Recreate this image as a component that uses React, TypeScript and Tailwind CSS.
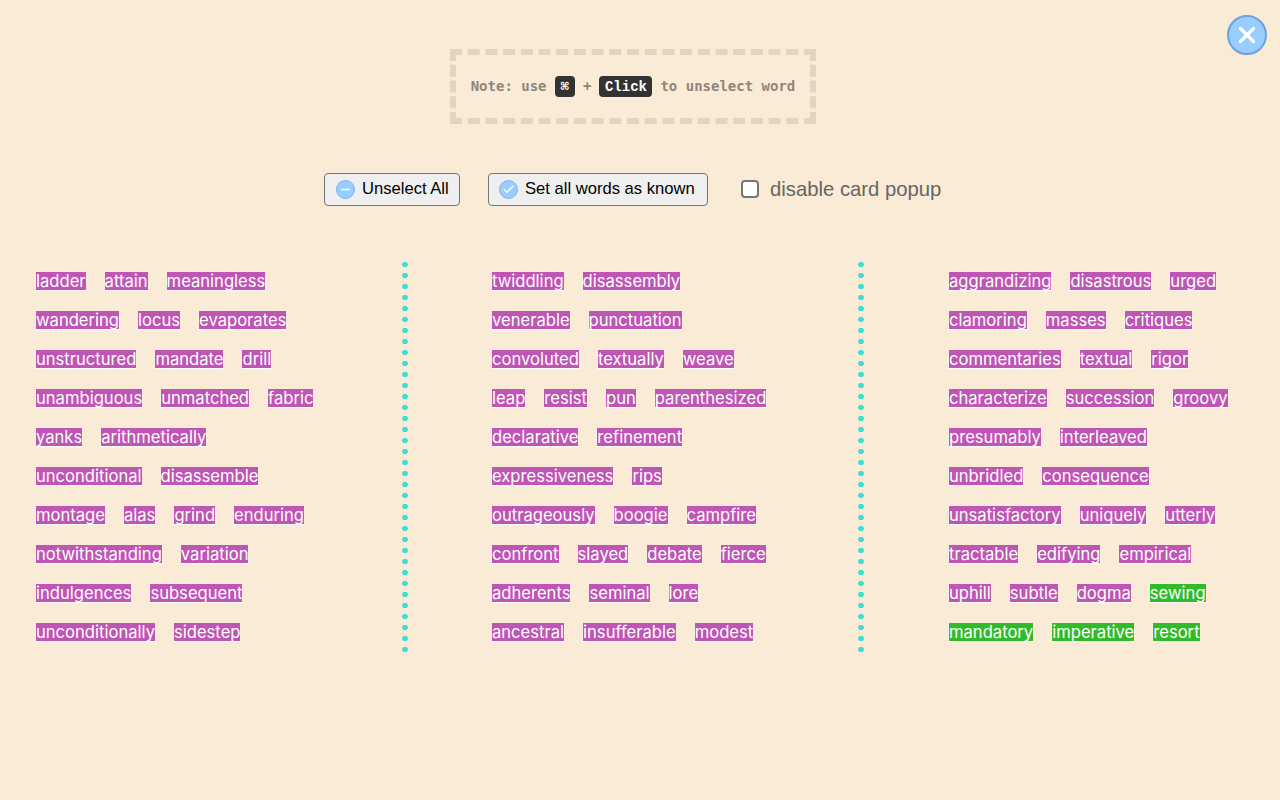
import { Check, Minus, X } from 'lucide-react';

const columns: string[][][] = [
  [
    ['ladder', 'attain', 'meaningless'],
    ['wandering', 'locus', 'evaporates'],
    ['unstructured', 'mandate', 'drill'],
    ['unambiguous', 'unmatched', 'fabric'],
    ['yanks', 'arithmetically'],
    ['unconditional', 'disassemble'],
    ['montage', 'alas', 'grind', 'enduring'],
    ['notwithstanding', 'variation'],
    ['indulgences', 'subsequent'],
    ['unconditionally', 'sidestep'],
  ],
  [
    ['twiddling', 'disassembly'],
    ['venerable', 'punctuation'],
    ['convoluted', 'textually', 'weave'],
    ['leap', 'resist', 'pun', 'parenthesized'],
    ['declarative', 'refinement'],
    ['expressiveness', 'rips'],
    ['outrageously', 'boogie', 'campfire'],
    ['confront', 'slayed', 'debate', 'fierce'],
    ['adherents', 'seminal', 'lore'],
    ['ancestral', 'insufferable', 'modest'],
  ],
  [
    ['aggrandizing', 'disastrous', 'urged'],
    ['clamoring', 'masses', 'critiques'],
    ['commentaries', 'textual', 'rigor'],
    ['characterize', 'succession', 'groovy'],
    ['presumably', 'interleaved'],
    ['unbridled', 'consequence'],
    ['unsatisfactory', 'uniquely', 'utterly'],
    ['tractable', 'edifying', 'empirical'],
    ['uphill', 'subtle', 'dogma', 'sewing'],
    ['mandatory', 'imperative', 'resort'],
  ],
];

const knownWords = ['sewing', 'mandatory', 'imperative', 'resort'];

const Word = ({ word }: { word: string }) => (
  <span
    className={`font-['Inter',sans-serif] text-[16.6px] leading-[18px] text-white shadow-[0_1px_1px_rgba(255,255,255,0.9)] ${
      knownWords.includes(word) ? 'bg-[#32bb28]' : 'bg-[#bf55b5]'
    }`}
  >
    {word}
  </span>
);

const Key = ({ children, className }: { children: React.ReactNode; className: string }) => (
  <kbd className={`inline-flex h-[21px] items-center rounded-[4px] bg-[#333] pt-[2px] font-bold text-white ${className}`}>
    {children}
  </kbd>
);

const Divider = () => (
  <div className="-mt-[2px] h-[396px] w-[6px] bg-[radial-gradient(circle,#40e0d0_2.5px,transparent_3px)] bg-[length:6px_11px]" />
);

export default function App() {
  return (
    <div className="relative min-h-[800px] bg-[#faebd7] font-['Liberation_Sans',sans-serif]">
      <button className="absolute right-[13px] top-[15px] flex h-10 w-10 items-center justify-center rounded-full border-2 border-[#6ea3d8] bg-[#99ccff] text-white">
        <X size={26} strokeWidth={3} />
      </button>

      <div className="flex justify-center pt-[49px] pr-[14px]">
        <div className="flex h-[75px] w-[366px] items-center justify-center gap-[8px] border-[6px] border-dashed border-[#e3d3c0] font-['DejaVu_Sans_Mono',monospace] text-[14px] font-bold text-[#8f8677]">
          <span>Note: use</span>
          <Key className="px-[6px]">⌘</Key>
          <span>+</span>
          <Key className="px-[5.5px]">Click</Key>
          <span>to unselect word</span>
        </div>
      </div>

      <div className="mt-[49px] flex h-[33px] items-center pl-[324px]">
        <button className="flex h-[33px] w-[136px] items-center gap-[7px] rounded-[4px] border border-[#767676] bg-[#efefef] pl-[11px] text-[16.6px] text-black">
          <span className="flex h-[19px] w-[19px] items-center justify-center rounded-full border border-[#7fb5ea] bg-[#99ccff] text-white">
            <Minus size={13} strokeWidth={2.5} />
          </span>
          Unselect All
        </button>
        <button className="ml-[28px] flex h-[33px] w-[220px] items-center gap-[7px] rounded-[4px] border border-[#767676] bg-[#efefef] pl-[10px] text-[16.6px] text-black">
          <span className="flex h-[19px] w-[19px] items-center justify-center rounded-full border border-[#7fb5ea] bg-[#99ccff] text-white">
            <Check size={13} strokeWidth={2.5} />
          </span>
          Set all words as known
        </button>
        <label className="ml-[33px] flex items-center gap-[11px] text-[20.3px] text-[#666]">
          <span className="-mt-[1px] h-[18px] w-[18px] rounded-[4px] border-2 border-[#767676] bg-white" />
          disable card popup
        </label>
      </div>

      <div className="mt-[55px] flex pl-[36px]">
        {columns.map((rows, i) => (
          <div key={i} className="flex">
            <div className={i === 2 ? 'ml-[1px] w-[300px]' : 'w-[366px]'}>
              {rows.map((row, j) => (
                <div key={j} className="flex h-[39px] items-center gap-[19px] whitespace-nowrap">
                  {row.map(word => (
                    <Word key={word} word={word} />
                  ))}
                </div>
              ))}
            </div>
            {i < 2 && (
              <>
                <Divider />
                <div className="w-[84px]" />
              </>
            )}
          </div>
        ))}
      </div>
    </div>
  );
}
